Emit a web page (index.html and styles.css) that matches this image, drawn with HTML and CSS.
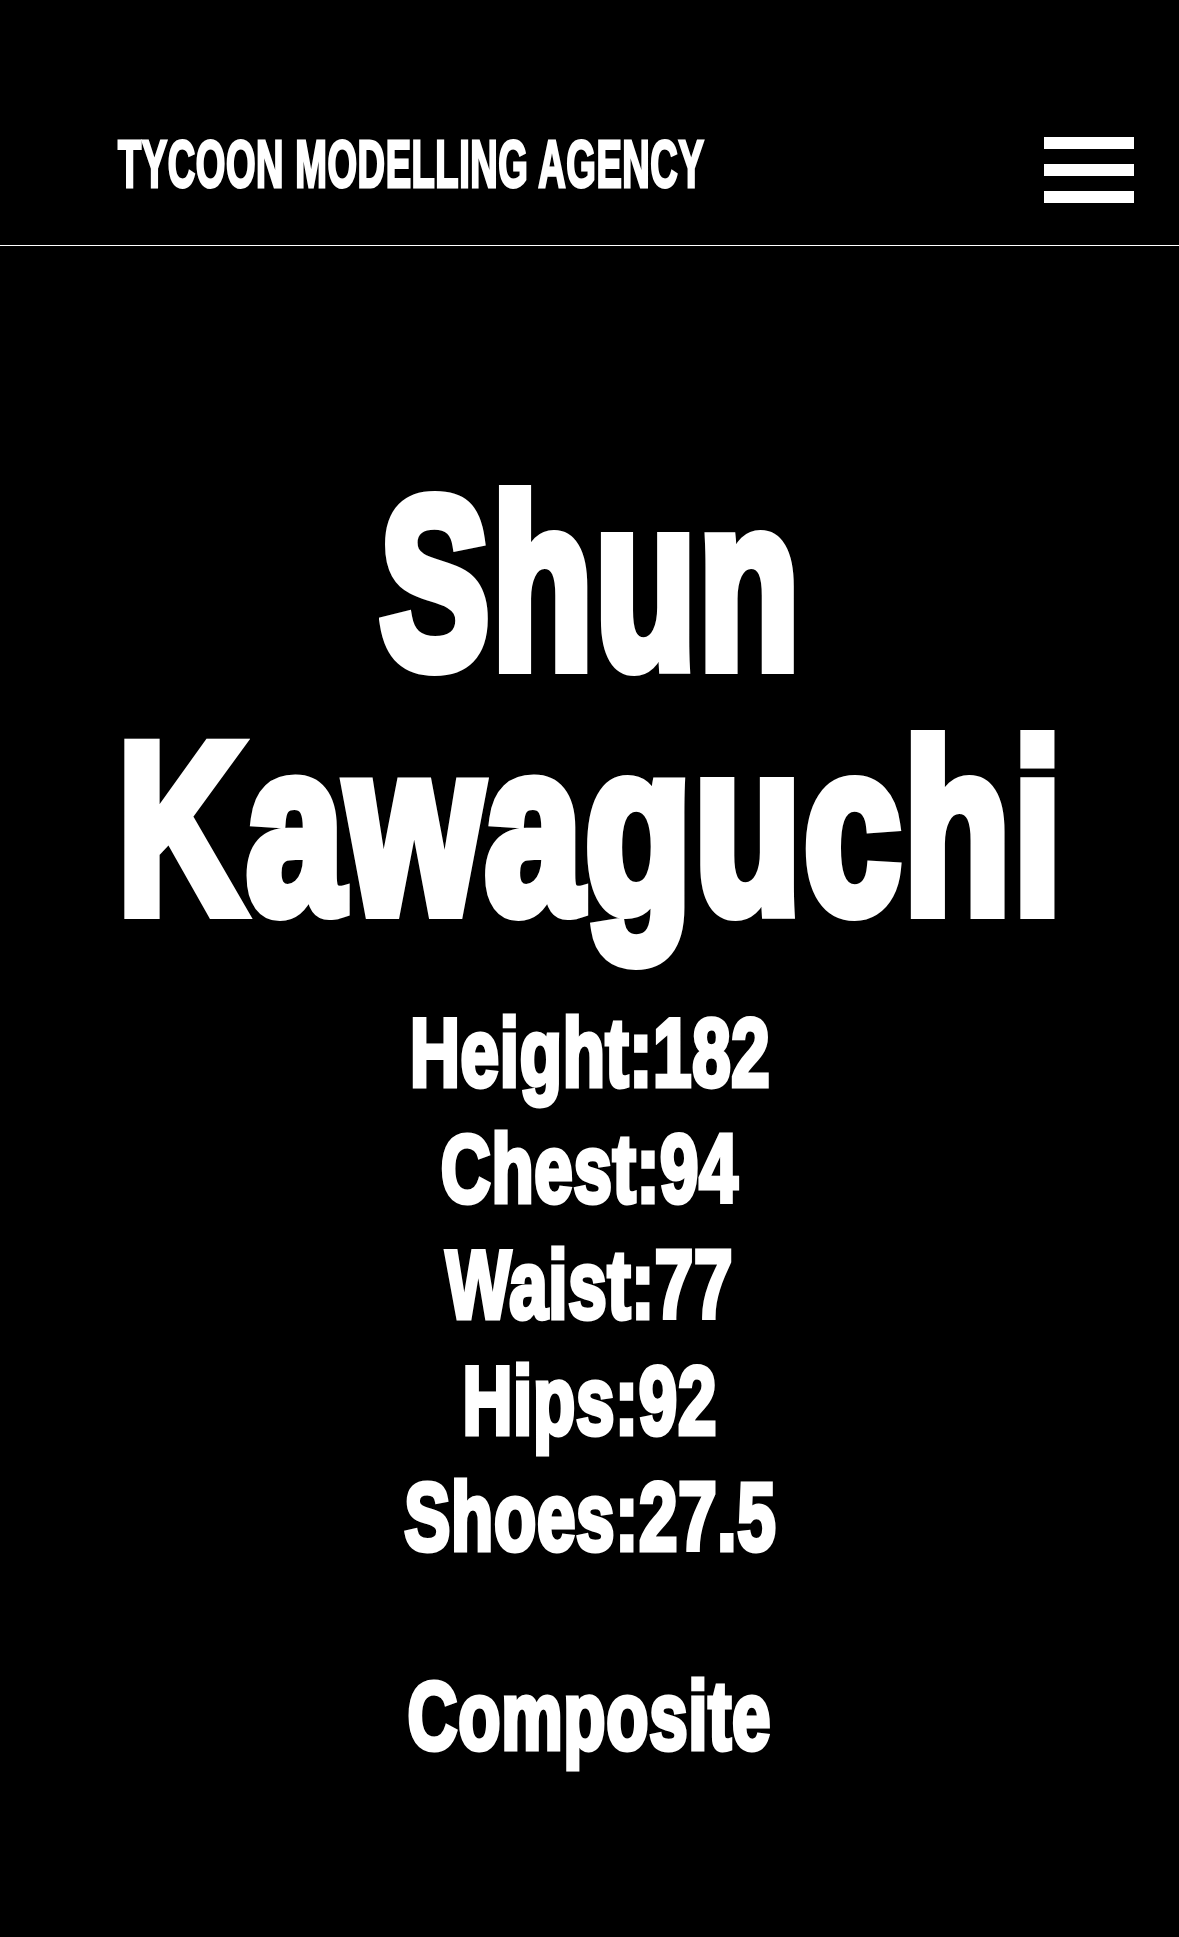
FILE: index.html
```html
<!DOCTYPE html>
<html lang="en">
<head>
<meta charset="utf-8">
<title>Shun Kawaguchi - Tycoon Modelling Agency</title>
<link rel="stylesheet" href="styles.css">
</head>
<body>
<header class="site-header">
  <div class="brand"><a class="brand-text" href="#">TYCOON MODELLING AGENCY</a></div>
  <button class="menu-btn" type="button" aria-label="Menu"><span></span><span></span><span></span></button>
</header>
<main class="profile">
  <h1 class="name">
    <span class="name-line name-first">Shun</span>
    <span class="name-line name-last">Kawaguchi</span>
  </h1>
  <ul class="stats">
    <li><span class="stat">Height:182</span></li>
    <li><span class="stat">Chest:94</span></li>
    <li><span class="stat">Waist:77</span></li>
    <li><span class="stat">Hips:92</span></li>
    <li><span class="stat">Shoes:27.5</span></li>
  </ul>
  <div class="composite-wrap"><a class="composite stat" href="#">Composite</a></div>
</main>
</body>
</html>
```
FILE: styles.css
```css
html, body {
  margin: 0;
  background: #000;
}
body {
  font-family: "Liberation Sans", Arial, sans-serif;
  color: #fff;
  min-height: 1937px;
  overflow-x: hidden;
}
.site-header {
  display: flex;
  align-items: flex-start;
  height: 246px;
  box-sizing: border-box;
  padding: 131px 45px 0 118px;
  border-bottom: 1px solid #fff;
}
.brand {
  flex: 1;
  min-width: 0;
}
.brand-text {
  display: inline-block;
  font-size: 66px;
  line-height: 66px;
  font-weight: 700;
  letter-spacing: 1px;
  white-space: nowrap;
  color: #fff;
  text-decoration: none;
  -webkit-text-stroke: 3px #fff;
  transform: scaleX(0.576);
  transform-origin: left center;
}
.menu-btn {
  flex: 0 0 90px;
  display: flex;
  flex-direction: column;
  gap: 15px;
  margin-top: 6px;
  padding: 0;
  border: 0;
  background: none;
}
.menu-btn span {
  display: block;
  height: 12px;
  background: #fff;
}
.profile {
  padding-top: 215px;
  overflow: hidden;
}
.name {
  margin: 0;
  display: flex;
  flex-direction: column;
  align-items: center;
  font-size: 242px;
  line-height: 245px;
  font-weight: 700;
  letter-spacing: 4px;
}
.name-line {
  display: block;
  padding-left: 4px;
  white-space: nowrap;
  -webkit-text-stroke: 14px #fff;
  transform-origin: center center;
}
.name-first {
  transform: scaleX(0.68);
}
.name-last {
  transform: scaleX(0.721);
}
.stats {
  list-style: none;
  margin: 44px 0 0;
  padding: 0;
  display: flex;
  flex-direction: column;
  align-items: center;
}
.stats li {
  display: block;
}
.stat {
  display: block;
  font-size: 96px;
  line-height: 116px;
  font-weight: 700;
  letter-spacing: 1px;
  padding-left: 1px;
  white-space: nowrap;
  color: #fff;
  text-decoration: none;
  -webkit-text-stroke: 5px #fff;
  transform: scaleX(0.72);
  transform-origin: center center;
}
.composite-wrap {
  margin-top: 83px;
  display: flex;
  justify-content: center;
}
```
